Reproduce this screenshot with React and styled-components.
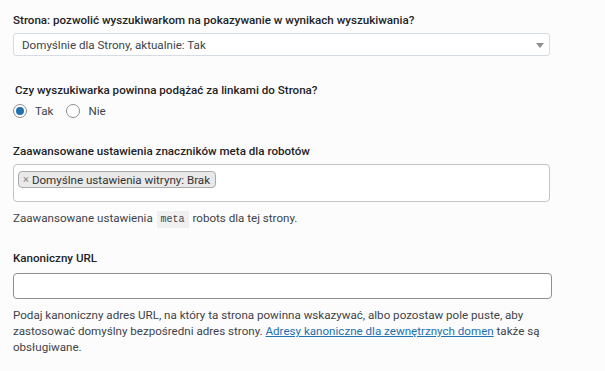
import React from 'react'
import styled, { createGlobalStyle } from 'styled-components'

const GlobalStyle = createGlobalStyle`
  html, body {
    margin: 0;
    padding: 0;
    background: #fcfcfc;
  }
  body {
    font-family: Roboto, "Noto Sans", sans-serif;
    font-size: 11.6px;
    line-height: 16px;
    color: #3c434a;
  }
`

const Page = styled.div`
  width: 540px;
  padding: 12px 0 0 13px;
  display: flex;
  flex-direction: column;
`

const Field = styled.div`
  display: flex;
  flex-direction: column;
  margin-bottom: ${(p) => p.$gap || 0}px;
`

const Label = styled.div`
  font-weight: 500;
  color: #1d2327;
  margin: 0 0 ${(p) => p.$below ?? 6}px ${(p) => p.$indent || 0}px;
`

const Select = styled.div`
  position: relative;
  height: 23px;
  width: 537px;
  box-sizing: border-box;
  border: 1px solid #d5dce6;
  border-radius: 3px;
  background: #fff;
  display: flex;
  align-items: center;
  padding-left: 8px;
  color: #3c434a;

  &::after {
    content: '';
    position: absolute;
    right: 5px;
    top: 9px;
    border-left: 4px solid transparent;
    border-right: 4px solid transparent;
    border-top: 5px solid #8c8f94;
  }
`

const Radios = styled.div`
  display: flex;
  align-items: center;
  gap: 13px;
  height: 14px;
`

const RadioItem = styled.label`
  display: flex;
  align-items: center;
  gap: 8px;
  color: #3c434a;
`

const Circle = styled.span`
  width: 14px;
  height: 14px;
  box-sizing: border-box;
  border-radius: 50%;
  border: 1px solid #8c8f94;
  background: #fff;
  display: flex;
  align-items: center;
  justify-content: center;

  &::before {
    content: '';
    width: 8px;
    height: 8px;
    border-radius: 50%;
    background: ${(p) => (p.$checked ? '#2271b1' : 'transparent')};
  }
`

const MultiBox = styled.div`
  height: 38px;
  width: 537px;
  box-sizing: border-box;
  border: 1px solid #c3c4c7;
  border-radius: 4px;
  background: #fff;
  padding: 6px 4px;
  display: flex;
  align-items: flex-start;
`

const Chip = styled.span`
  display: inline-flex;
  align-items: center;
  gap: 3px;
  height: 17px;
  box-sizing: border-box;
  padding: 0 5px 0 4px;
  background: #e9e9e9;
  border: 1px solid #aaa;
  border-radius: 4px;
  color: #333;
`

const ChipX = styled.span`
  color: #888;
  font-size: 11px;
`

const Help = styled.p`
  margin: ${(p) => p.$top ?? 8}px 0 0;
  color: #3c434a;
  width: 540px;
`

const Code = styled.code`
  font-family: "Liberation Mono", monospace;
  font-size: 10px;
  background: #f0f0f1;
  padding: 3px 4px;
  margin: 0 1px;
  color: #3c434a;
`

const Input = styled.div`
  height: 26px;
  width: 539px;
  box-sizing: border-box;
  border: 1px solid #8c8f94;
  border-radius: 4px;
  background: #fff;
`

const Link = styled.a`
  color: #2271b1;
  text-decoration: underline;
`

export default function App() {
  return (
    <>
      <GlobalStyle />
      <Page>
        <Field $gap={26}>
          <Label $below={5}>Strona: pozwolić wyszukiwarkom na pokazywanie w wynikach wyszukiwania?</Label>
          <Select>Domyślnie dla Strony, aktualnie: Tak</Select>
        </Field>
        <Field $gap={25}>
          <Label $indent={2}>Czy wyszukiwarka powinna podążać za linkami do Strona?</Label>
          <Radios>
            <RadioItem>
              <Circle $checked />
              Tak
            </RadioItem>
            <RadioItem>
              <Circle />
              Nie
            </RadioItem>
          </Radios>
        </Field>
        <Field $gap={22}>
          <Label $below={5}>Zaawansowane ustawienia znaczników meta dla robotów</Label>
          <MultiBox>
            <Chip>
              <ChipX>×</ChipX>
              Domyślne ustawienia witryny: Brak
            </Chip>
          </MultiBox>
          <Help>
            Zaawansowane ustawienia <Code>meta</Code> robots dla tej strony.
          </Help>
        </Field>
        <Field>
          <Label $below={7}>Kanoniczny URL</Label>
          <Input />
          <Help>
            Podaj kanoniczny adres URL, na który ta strona powinna wskazywać, albo pozostaw pole puste, aby
            zastosować domyślny bezpośredni adres strony.{' '}
            <Link href="#">Adresy kanoniczne dla zewnętrznych domen</Link> także są obsługiwane.
          </Help>
        </Field>
      </Page>
    </>
  )
}
